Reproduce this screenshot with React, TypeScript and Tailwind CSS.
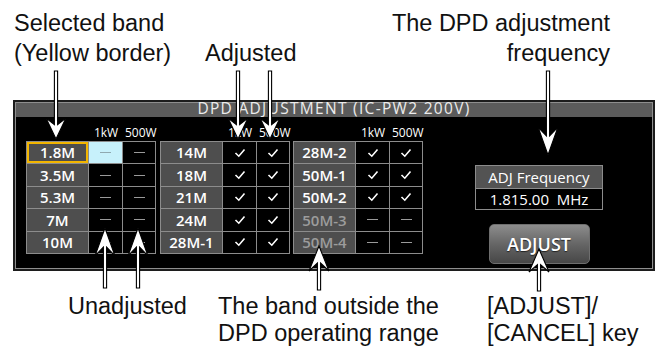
import React from "react";

type Mark = "check" | "dash" | "dashSel";
type Row = { band: string; kw: Mark; w5: Mark; sel?: boolean; off?: boolean };

const groups: Row[][] = [
  [
    { band: "1.8M", kw: "dashSel", w5: "dash", sel: true },
    { band: "3.5M", kw: "dash", w5: "dash" },
    { band: "5.3M", kw: "dash", w5: "dash" },
    { band: "7M", kw: "dash", w5: "dash" },
    { band: "10M", kw: "dash", w5: "dash" },
  ],
  [
    { band: "14M", kw: "check", w5: "check" },
    { band: "18M", kw: "check", w5: "check" },
    { band: "21M", kw: "check", w5: "check" },
    { band: "24M", kw: "check", w5: "check" },
    { band: "28M-1", kw: "check", w5: "check" },
  ],
  [
    { band: "28M-2", kw: "check", w5: "check" },
    { band: "50M-1", kw: "check", w5: "check" },
    { band: "50M-2", kw: "check", w5: "check" },
    { band: "50M-3", kw: "dash", w5: "dash", off: true },
    { band: "50M-4", kw: "dash", w5: "dash", off: true },
  ],
];

// callout arrows: x, tail y, tip y, head length
const downArrows = [
  [56, 71, 139, 21],
  [238, 71, 139, 21],
  [270, 71, 139, 21],
  [548, 71, 155, 28],
];
const upArrows = [
  [105, 288, 228, 28],
  [138, 288, 228, 28],
  [319, 290, 246, 25],
  [539, 291, 249, 23],
];

function arrowPoints(x: number, tail: number, tip: number, len: number) {
  const s = 1.6;
  const h = 10;
  const d = tip > tail ? 1 : -1;
  const base = tip - d * len;
  const notch = tip - d * len * 0.68;
  return [
    [x - s, tail],
    [x - s, notch],
    [x - h, base],
    [x, tip],
    [x + h, base],
    [x + s, notch],
    [x + s, tail],
  ]
    .map((p) => p.join(","))
    .join(" ");
}

function CellMark({ mark }: { mark: Mark }) {
  if (mark === "check") {
    return (
      <svg width="12" height="10" viewBox="0 0 12 10">
        <polyline points="1.5,5 4.8,8.2 10.5,1.5" fill="none" stroke="#fff" strokeWidth="1.6" />
      </svg>
    );
  }
  return <div className={`h-[1px] w-[11px] ${mark === "dashSel" ? "bg-[#8fa9b0]" : "bg-[#9a9a9a]"}`} />;
}

function Group({ rows }: { rows: Row[] }) {
  return (
    <div className="flex flex-col border-l border-t border-[#8c8c8c]">
      {rows.map((r) => (
        <div key={r.band} className="flex">
          <div
            className={`flex h-[22.4px] w-[62px] items-center justify-center border-r border-b border-[#8c8c8c] bg-[#4e4e4e] text-[15px] font-semibold ${
              r.off ? "text-[#9c9c9c]" : "text-white"
            } ${r.sel ? "shadow-[inset_0_0_0_2px_#f3b600]" : ""}`}
          >
            {r.band}
          </div>
          <div
            className={`flex h-[22.4px] w-[34px] items-center justify-center border-r border-b border-[#8c8c8c] ${
              r.kw === "dashSel" ? "bg-[#c7f1fb]" : "bg-black"
            }`}
          >
            <CellMark mark={r.kw} />
          </div>
          <div className="flex h-[22.4px] w-[33px] items-center justify-center border-r border-b border-[#8c8c8c] bg-black">
            <CellMark mark={r.w5} />
          </div>
        </div>
      ))}
    </div>
  );
}

function ColHeads() {
  return (
    <div className="flex w-[130px] text-[12px] leading-[17px] text-white">
      <div className="w-[63px]" />
      <div className="w-[34px] text-center">1kW</div>
      <div className="w-[33px] pl-[2px] text-center">500W</div>
    </div>
  );
}

export default function App() {
  return (
    <div className="relative h-[347px] w-[660px] overflow-hidden bg-white font-['Liberation_Sans',Arial,sans-serif] text-[#111]">
      <div className="flex h-[100px] pt-[9px] text-[23.5px] leading-[29.5px] whitespace-nowrap">
        <div className="ml-[14px] w-[191px]">
          Selected band
          <br />
          (Yellow border)
        </div>
        <div className="mt-[29.5px]">Adjusted</div>
        <div className="ml-auto mr-[50px] text-right">
          The DPD adjustment
          <br />
          frequency
        </div>
      </div>

      <div className="ml-[13px] h-[171px] w-[642px] border-2 border-[#1c1c1c] bg-black font-['Open_Sans',sans-serif]">
        <div className="flex h-full flex-col border border-[#8e8e8e]">
          <div className="h-[14px] bg-[#5b5b5b] text-center text-[15.5px] leading-[10px] tracking-[1.3px] text-[#ececec] whitespace-pre">
            DPD ADJUSTMENT (IC-PW2 200V)
          </div>
          <div className="flex flex-1 bg-black pl-[10px] pt-[7px]">
            <div className="flex flex-col">
              <div className="flex">
                <ColHeads />
                <div className="ml-[4px]">
                  <ColHeads />
                </div>
                <div className="ml-[3px]">
                  <ColHeads />
                </div>
              </div>
              <div className="flex">
                <Group rows={groups[0]} />
                <div className="ml-[4px]">
                  <Group rows={groups[1]} />
                </div>
                <div className="ml-[3px]">
                  <Group rows={groups[2]} />
                </div>
              </div>
            </div>
            <div className="ml-[52px] flex flex-col items-center pt-[41px]">
              <div className="w-[128px] border border-[#8c8c8c] text-[15px] text-white">
                <div className="flex h-[23px] items-center justify-center border-b border-[#8c8c8c] bg-[#535353]">
                  ADJ Frequency
                </div>
                <div className="flex h-[20px] items-center justify-center whitespace-pre bg-black">
                  1.815.00  MHz
                </div>
              </div>
              <div className="mt-[14px] flex h-[40px] w-[101px] items-center justify-center rounded-[5px] border border-[#6e6e6e] bg-gradient-to-b from-[#8d8d8d] via-[#666] to-[#474747] text-[18px] font-semibold text-white [text-shadow:0_1px_1px_#222]">
                ADJUST
              </div>
            </div>
          </div>
        </div>
      </div>

      <div className="flex pt-[22px] text-[23.5px] leading-[27px] whitespace-nowrap">
        <div className="ml-[68px] w-[150px]">Unadjusted</div>
        <div className="w-[269px]">
          The band outside the
          <br />
          DPD operating range
        </div>
        <div>
          [ADJUST]/
          <br />
          [CANCEL] key
        </div>
      </div>

      <svg className="pointer-events-none absolute left-0 top-0" width="660" height="347">
        {[...downArrows, ...upArrows].map(([x, tail, tip, len], i) => (
          <polygon
            key={i}
            points={arrowPoints(x, tail, tip, len)}
            fill="#fff"
            stroke="#000"
            strokeWidth="1.1"
            strokeLinejoin="miter"
          />
        ))}
      </svg>
    </div>
  );
}
